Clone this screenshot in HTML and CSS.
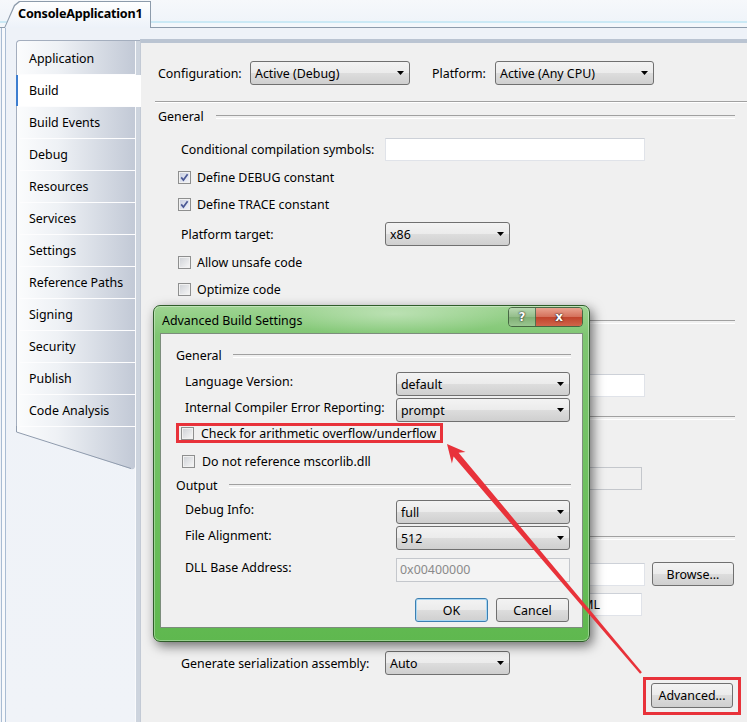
FILE: index.html
```html
<!DOCTYPE html>
<html>
<head>
<meta charset="utf-8">
<link rel="stylesheet" href="styles.css">
</head>
<body>
<div class="tabstrip">
  <div class="doctab"><div class="doctab-in">ConsoleApplication1</div></div>
</div>
<div class="frame">
  <nav class="nav">
    <div class="nav-list">
      <div class="nav-item">Application</div>
      <div class="nav-item sel">Build</div>
      <div class="nav-item">Build Events</div>
      <div class="nav-item">Debug</div>
      <div class="nav-item">Resources</div>
      <div class="nav-item">Services</div>
      <div class="nav-item">Settings</div>
      <div class="nav-item">Reference Paths</div>
      <div class="nav-item">Signing</div>
      <div class="nav-item">Security</div>
      <div class="nav-item">Publish</div>
      <div class="nav-item">Code Analysis</div>
    </div>
    <svg class="nav-tail" width="119" height="46" viewBox="0 0 119 46">
      <defs>
        <linearGradient id="tailg" x1="0" x2="1" y1="0" y2="0">
          <stop offset="0" stop-color="#fbfcfd"/>
          <stop offset="0.35" stop-color="#eef1f5"/>
          <stop offset="1" stop-color="#c2c9d6"/>
        </linearGradient>
      </defs>
      <path d="M0,0 H119 V41 Q118,44 115,43 L0,6 Z" fill="url(#tailg)"/>
      <path d="M0.5,0 V6 L115,42.5" fill="none" stroke="#8f9bad" stroke-width="1"/>
    </svg>
  </nav>
  <main class="content">
    <div class="row cfg-row">
      <span class="cfg-label">Configuration:</span>
      <div class="dd w160">Active (Debug)</div>
      <span class="plat-label">Platform:</span>
      <div class="dd w159">Active (Any CPU)</div>
    </div>
    <div class="sep"></div>
    <div class="hdr mt5">General</div>
    <div class="row ind mt13">
      <span class="lbl">Conditional compilation symbols:</span>
      <div class="tb w260"></div>
    </div>
    <div class="row chk mt7"><span class="cb on"><svg width="11" height="11" viewBox="0 0 11 11"><path d="M2.2,5.4 L4.4,8 L8.6,2.2" fill="none" stroke="#4b5996" stroke-width="1.7"/></svg></span>Define DEBUG constant</div>
    <div class="row chk mt9"><span class="cb on"><svg width="11" height="11" viewBox="0 0 11 11"><path d="M2.2,5.4 L4.4,8 L8.6,2.2" fill="none" stroke="#4b5996" stroke-width="1.7"/></svg></span>Define TRACE constant</div>
    <div class="row ind mt9">
      <span class="lbl">Platform target:</span>
      <div class="dd w125">x86</div>
    </div>
    <div class="row chk mt7"><span class="cb"></span>Allow unsafe code</div>
    <div class="row chk mt9"><span class="cb"></span>Optimize code</div>

    <div class="hdr mt15">Errors and warnings</div>
    <div class="row ind mt8">
      <span class="lbl">Warning level:</span>
      <div class="dd w125">4</div>
    </div>
    <div class="row ind mt12">
      <span class="lbl">Suppress warnings:</span>
      <div class="tb w260"></div>
    </div>
    <div class="hdr mt12">Treat warnings as errors</div>
    <div class="row chk mt5"><span class="rb"></span>None</div>
    <div class="row chk tall mt18"><span class="rb"></span><span class="spec-lbl">Specific warnings:</span><div class="tb off w260"></div></div>
    <div class="row chk mt10"><span class="rb"></span>All</div>
    <div class="hdr mt11">Output</div>
    <div class="row ind mt16">
      <span class="lbl">Output path:</span>
      <div class="tb w260">bin\Debug\</div>
      <div class="btn browse">Browse...</div>
    </div>
    <div class="row chk tall mt7"><span class="cb"></span><span class="xml-lbl">XML documentation file:</span><div class="tb w260">bin\Debug\ConsoleApplication1.XML</div></div>
    <div class="row chk mt6"><span class="cb"></span>Register for COM interop</div>
    <div class="row ind mt11">
      <span class="lbl">Generate serialization assembly:</span>
      <div class="dd w125">Auto</div>
    </div>
    <div class="adv-mark"><div class="btn adv">Advanced...</div></div>
  </main>
</div>

<div class="dialog">
  <div class="titlebar">
    <span class="title">Advanced Build Settings</span>
    <div class="capbtns">
      <div class="cap help">?</div>
      <div class="cap close">x</div>
    </div>
  </div>
  <div class="client">
    <div class="dhdr gen">General</div>
    <div class="drow mt8"><span class="dlbl">Language Version:</span><div class="dd w174">default</div></div>
    <div class="drow mt2"><span class="dlbl">Internal Compiler Error Reporting:</span><div class="dd w174">prompt</div></div>
    <div class="mark mt1"><span class="cb"></span>Check for arithmetic overflow/underflow</div>
    <div class="dchk mt9"><span class="cb"></span>Do not reference mscorlib.dll</div>
    <div class="dhdr mt7">Output</div>
    <div class="drow mt6"><span class="dlbl">Debug Info:</span><div class="dd w174">full</div></div>
    <div class="drow mt2"><span class="dlbl">File Alignment:</span><div class="dd w174">512</div></div>
    <div class="drow mt8"><span class="dlbl">DLL Base Address:</span><div class="tb off dis w174">0x00400000</div></div>
    <div class="dbtns">
      <div class="btn ok">OK</div>
      <div class="btn cancel">Cancel</div>
    </div>
  </div>
</div>

<svg class="arrow" width="747" height="722" viewBox="0 0 747 722">
  <polygon points="447,444 465.5,451.9 458.6,452.8 641.9,672.2 640.1,673.8 453.6,456.6 451.9,463.5" fill="#e8323a"/>
</svg>
</body>
</html>
```
FILE: styles.css
```css
* { box-sizing: border-box; }
html, body { margin: 0; padding: 0; }
body {
  width: 747px;
  height: 722px;
  overflow: hidden;
  position: relative;
  font-family: "Noto Sans", "Open Sans", sans-serif;
  font-size: 12.4px;
  color: #000;
  background: #eef2f8;
}

/* document tab strip */
.tabstrip {
  height: 28px;
  background: linear-gradient(#f6f8fb, #eef3f9);
  border-bottom: 1px solid #8d9bab;
  box-shadow: inset 0 -4px 0 #f3f7fb, inset 0 -6px 0 #cbe9f5;
  display: flex;
  align-items: flex-end;
}
.doctab {
  margin-left: 4px;
  margin-bottom: -1px;
  width: 147px;
  height: 27px;
  background: #8d9bab;
  clip-path: polygon(0 100%, 10px 4px, 15px 0, 100% 0, 100% 100%);
  padding: 1px 1px 0 1px;
}
.doctab-in {
  height: 100%;
  background: linear-gradient(#ffffff, #edf2f9);
  clip-path: polygon(0 100%, 10px 4px, 15px 0, 100% 0, 100% 100%);
  font-weight: bold;
  font-size: 12.6px;
  padding-left: 13px;
  line-height: 24px;
  letter-spacing: -0.2px;
  white-space: nowrap;
}

/* outer frame */
.frame {
  display: flex;
  height: 694px;
  padding: 11px 0 0 16px;
  background:
    linear-gradient(to right, transparent 1px, #a9bcd3 1px, #a9bcd3 2px, #f7f9fc 2px, #f7f9fc 5px, #a9bcd3 5px, #a9bcd3 6px, transparent 6px),
    linear-gradient(#eef2f8, #f0f3f8);
}

/* navigation */
.nav {
  width: 124px;
  margin-top: 1px;
  display: flex;
  flex-direction: column;
  background: linear-gradient(to right, transparent 119px, #f9fafc 119px, #f9fafc 120px, #cdd4de 120px);
}
.nav-list {
  border-left: 1px solid #a4aebe;
  border-top: 1px solid #a4aebe;
  border-top-left-radius: 4px;
  padding-top: 2px;
  background: linear-gradient(to right, #fbfcfd, #eef1f5 35%, #c2c9d6 118px, transparent 118px);
}
.nav-item {
  position: relative;
  height: 32px;
  line-height: 31px;
  padding-left: 12px;
  background: linear-gradient(to right, #fbfcfd, #eef1f5 35%, #c2c9d6) 0 0 / 118px 100% no-repeat;
}
.nav-item::after {
  content: "";
  position: absolute;
  left: 3px;
  width: 115px;
  bottom: 0;
  height: 1px;
  background: #fdfdfe;
}
.nav-item.sel {
  background: #ffffff;
  margin-right: -1px;
}
.nav-item.sel::before {
  content: "";
  position: absolute;
  left: -1px;
  top: 0;
  width: 2px;
  height: 31px;
  background: #3d7ed0;
}
.nav-tail { display: block; margin-top: -1px; }

/* content panel */
.content {
  flex: 1;
  background: #f0f0f0;
  border-top: 4px solid #bac4d2;
  border-left: 1px solid #c3cad5;
  padding-left: 17px;
  display: flex;
  flex-direction: column;
}
.row { display: flex; align-items: center; flex: none; }
.cfg-row { margin-top: 18px; height: 24px; }
.cfg-label { width: 92px; }
.plat-label { width: 63px; margin-left: 22px; }
.sep {
  margin-top: 16px;
  margin-left: -3px;
  height: 2px;
  border-top: 1px solid #a0a0a0;
  border-bottom: 1px solid #ffffff;
}
.hdr, .dhdr {
  display: flex;
  align-items: center;
  height: 17px;
  flex: none;
}
.hdr::after, .dhdr::after {
  content: "";
  flex: 1;
  height: 2px;
  border-top: 1px solid #a0a0a0;
  border-bottom: 1px solid #ffffff;
  margin-left: 12px;
  margin-right: 12px;
}
.ind { margin-left: 23px; }
.lbl { width: 204px; }
.chk { margin-left: 20px; height: 18px; }
.chk.tall { height: 23px; }
.chk .cb, .chk .rb { margin-right: 6px; }
.spec-lbl { width: 185px; }
.xml-lbl { width: 185px; }

.mt1 { margin-top: 1px; }
.mt2 { margin-top: 2px; }
.mt5 { margin-top: 5px; }
.mt6 { margin-top: 6px; }
.mt7 { margin-top: 7px; }
.mt8 { margin-top: 8px; }
.mt9 { margin-top: 9px; }
.mt10 { margin-top: 10px; }
.mt11 { margin-top: 11px; }
.mt12 { margin-top: 12px; }
.mt13 { margin-top: 13px; }
.mt15 { margin-top: 15px; }
.mt16 { margin-top: 16px; }
.mt18 { margin-top: 18px; }

/* controls */
.dd {
  display: flex;
  align-items: center;
  height: 24px;
  padding-left: 4px;
  border: 1px solid #707070;
  border-radius: 3px;
  background: linear-gradient(#f3f3f3, #ebebeb 50%, #dddddd 50%, #cfcfcf);
  flex: none;
}
.dd::after {
  content: "";
  margin-left: auto;
  margin-right: 5px;
  width: 7px;
  height: 4px;
  background: #000;
  clip-path: polygon(0 0, 100% 0, 50% 100%);
}
.w125 { width: 125px; }
.w159 { width: 159px; }
.w160 { width: 160px; }
.w174 { width: 174px; }
.w260 { width: 260px; }
.tb {
  height: 23px;
  background: #ffffff;
  border: 1px solid #e0e3e9;
  border-top-color: #cdd1d8;
  padding-left: 3px;
  line-height: 21px;
  white-space: nowrap;
  overflow: hidden;
  flex: none;
}
.tb.off {
  background: #f0f0f0;
  border-color: #c4c7cc;
}
.tb.dis {
  height: 24px;
  line-height: 22px;
  color: #8a8a8a;
  background: #f4f4f4;
}
.cb {
  width: 13px;
  height: 13px;
  flex: none;
  border: 1px solid #8e8f8f;
  background: linear-gradient(135deg, #cdd0d5, #f8f8f8);
  box-shadow: inset 0 0 0 1px #f1f1f1;
  display: inline-flex;
  align-items: center;
  justify-content: center;
}
.cb.on { background: linear-gradient(135deg, #c7cde0, #f4f6fb); }
.cb svg { display: block; }
.rb {
  width: 13px;
  height: 13px;
  flex: none;
  border: 1px solid #8e8f8f;
  border-radius: 50%;
  background: linear-gradient(135deg, #cdd0d5, #f8f8f8);
}
.btn {
  height: 24px;
  border: 1px solid #707070;
  border-radius: 3px;
  background: linear-gradient(#f3f3f3, #ebebeb 50%, #dddddd 50%, #cfcfcf);
  display: flex;
  align-items: center;
  justify-content: center;
  flex: none;
}
.browse { width: 82px; margin-left: 7px; }
.adv-mark {
  margin-top: 2px;
  align-self: flex-end;
  margin-right: 6px;
  width: 98px;
  height: 38px;
  border: 3px solid #e8323a;
  padding: 3px 0 0 5px;
}
.adv { width: 82px; height: 25px; }

/* dialog */
.dialog {
  position: absolute;
  left: 153px;
  top: 305px;
  width: 437px;
  height: 337px;
  border: 1px solid #2f5d2a;
  border-radius: 7px;
  background:
    radial-gradient(ellipse 120px 22px at 240px 8px, rgba(255,255,255,0.35), transparent),
    linear-gradient(#9ed492, #7fc672 30px, #6cbf5d 60%, #5fb84f);
  box-shadow: 3px 4px 12px rgba(0,0,0,0.55), inset 0 0 0 1px rgba(255,255,255,0.35);
  display: flex;
  flex-direction: column;
}
.titlebar {
  height: 27px;
  display: flex;
  align-items: flex-start;
  flex: none;
}
.title {
  flex: 1;
  padding-left: 8px;
  padding-top: 7px;
  line-height: 16px;
}
.capbtns {
  display: flex;
  margin-right: 6px;
  margin-top: 1px;
  border: 1px solid rgba(40,60,40,0.7);
  border-radius: 4px;
  overflow: hidden;
}
.cap {
  height: 18px;
  display: flex;
  align-items: center;
  justify-content: center;
  color: #fff;
  font-weight: bold;
  font-family: "DejaVu Sans", sans-serif;
  text-shadow: 0 0 2px #222, 0 0 1px #222;
}
.help {
  width: 27px;
  font-size: 12px;
  background: linear-gradient(#b9d8b2, #93bd89 50%, #7fae74 50%, #9ac690);
  border-right: 1px solid rgba(40,60,40,0.6);
}
.close {
  width: 46px;
  font-size: 12px;
  background: linear-gradient(#e9a28f, #d4705a 50%, #c0432b 50%, #d0654a);
}
.client {
  margin: 0 6px;
  height: 295px;
  background: #f0f0f0;
  border: 1px solid rgba(30,60,30,0.55);
  display: flex;
  flex-direction: column;
  padding-left: 15px;
}
.dhdr.gen { margin-top: 13px; }
.dhdr::after { margin-left: 11px; margin-right: 11px; }
.drow { display: flex; align-items: center; margin-left: 9px; flex: none; }
.dlbl { width: 211px; padding-bottom: 5px; }
.mark {
  display: flex;
  align-items: center;
  width: 267px;
  height: 20px;
  border: 3px solid #e8323a;
  padding-left: 2px;
  flex: none;
}
.mark .cb { margin-right: 7px; }
.dchk { display: flex; align-items: center; height: 18px; margin-left: 6px; flex: none; }
.dchk .cb { margin-right: 7px; }
.dbtns {
  display: flex;
  justify-content: flex-end;
  gap: 8px;
  margin-top: 16px;
  margin-right: 13px;
}
.ok { width: 73px; border-color: #3c7fb1; box-shadow: inset 0 0 0 1px #a9d7f3; }
.cancel { width: 73px; }

/* annotation arrow */
.arrow {
  position: absolute;
  left: 0;
  top: 0;
  pointer-events: none;
}
```
